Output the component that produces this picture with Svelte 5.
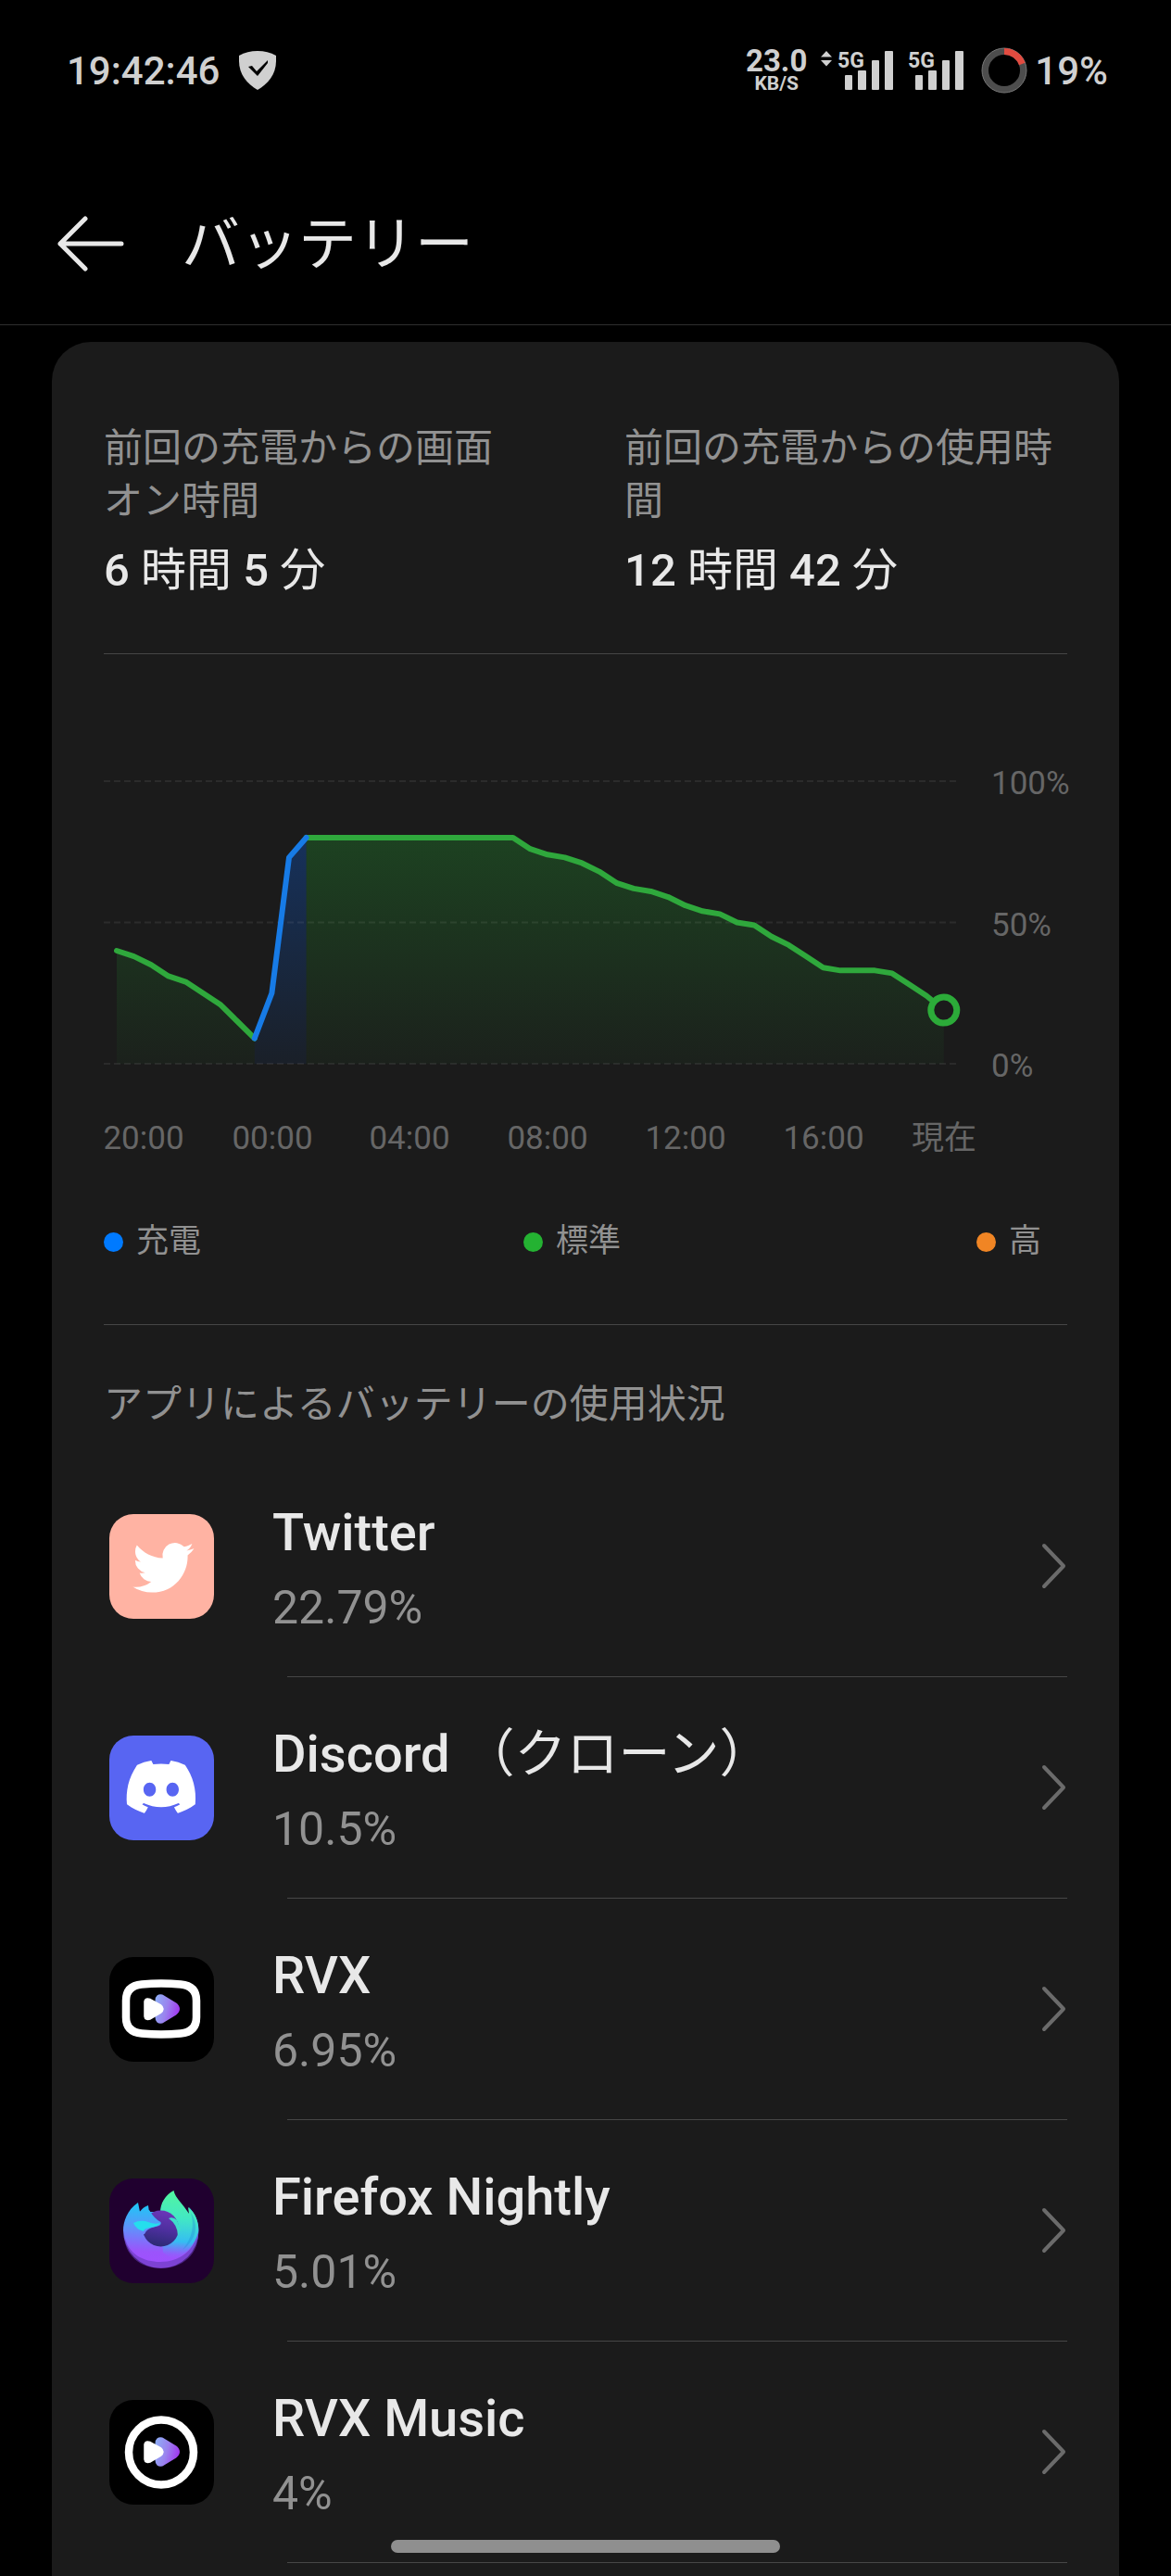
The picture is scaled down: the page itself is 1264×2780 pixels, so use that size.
<script>
  // Niveau de batterie toutes les 30 minutes, sur 24 heures
  const levels = [
    40, 38, 35, 31, 29, 25, 21, 15, 9, 25, 73, 80, 80, 80, 80, 80, 80,
    80, 80, 80, 80, 80, 80, 80, 76, 74, 73, 71, 68, 64, 62, 61, 59, 56,
    54, 53, 50, 49, 45, 42, 38, 34, 33, 33, 33, 32, 28, 24, 19
  ];

  const segments = [
    { from: 0, to: 8, kind: 'normal' },
    { from: 11, to: 48, kind: 'normal' },
    { from: 8, to: 11, kind: 'charging' }
  ];

  const gridLines = [100, 50, 0];

  const hours = [
    { label: '20:00', x: 43 },
    { label: '00:00', x: 182 },
    { label: '04:00', x: 330 },
    { label: '08:00', x: 479 },
    { label: '12:00', x: 628 },
    { label: '16:00', x: 777 },
    { label: '現在', x: 907 }
  ];

  const stats = [
    { label: '前回の充電からの画面オン時間', hours: 6, minutes: 5 },
    { label: '前回の充電からの使用時間', hours: 12, minutes: 42 }
  ];

  const legend = [
    { label: '充電', kind: 'charging' },
    { label: '標準', kind: 'normal' },
    { label: '高', kind: 'high' }
  ];

  const apps = [
    { name: 'Twitter', usage: '22.79%', icon: 'twitter' },
    { name: 'Discord', suffix: '（クローン）', usage: '10.5%', icon: 'discord' },
    { name: 'RVX', usage: '6.95%', icon: 'rvx' },
    { name: 'Firefox Nightly', usage: '5.01%', icon: 'firefox' },
    { name: 'RVX Music', usage: '4%', icon: 'music' }
  ];

  const px = (i) => 14 + i * 18.6;
  const py = (level) => 348 - level * 3.05;

  function linePath({ from, to }) {
    return levels
      .slice(from, to + 1)
      .map((level, i) => `${i ? 'L' : 'M'}${px(from + i)} ${py(level)}`)
      .join(' ');
  }

  function areaPath(segment) {
    return `${linePath(segment)} L${px(segment.to)} ${py(0)} L${px(segment.from)} ${py(0)} Z`;
  }
</script>

{#snippet signal(arrows)}
  <svg class="signal" width={arrows ? 80 : 62} height="52" viewBox="{arrows ? 0 : 18} -4 {arrows ? 80 : 62} 52" aria-hidden="true">
    {#if arrows}
      <path d="M7 1 L13 7.500 H1 Z M7 17.500 L13 11 H1 Z" />
    {/if}
    <text x="19" y="19">5G</text>
    <rect x="27" y="27" width="8" height="16" rx="1" />
    <rect x="41" y="22" width="9" height="21" rx="1" />
    <rect x="56" y="11" width="8" height="32" rx="1" />
    <rect x="70" y="1" width="9" height="42" rx="1" />
  </svg>
{/snippet}

{#snippet play()}
  <path d="M51 47 Q51 41 57 42 L71 50.500 Q78 56 71 61.500 L57 70 Q51 71 51 65 Z" fill="url(#play)" stroke="url(#play)" stroke-width="3" stroke-linejoin="round" />
  <path d="M38.500 48 Q39 44.500 44 46 L55 52 Q60 56 55 60 L44 66.500 Q39 68 38.500 64 Z" fill="#fff" stroke="#fff" stroke-width="2.500" stroke-linejoin="round" />
{/snippet}

<div class="screen">
  <div class="status">
    <span class="clock">19:42:46</span>
    <svg class="shield" width="42" height="42" viewBox="0 0 42 42" aria-hidden="true">
      <path d="M1 5 Q10 0 21 0 Q32 0 41 5 V11 C41 25 32 36 21 42 C10 36 1 25 1 11 Z" fill="#d0d0d0" />
      <path d="M11 17 L15 16 L20 22 L32 10 V13 L21 27 Z" fill="#000" />
    </svg>

    <div class="status-right">
      <div class="rate">
        <span class="rate-value">23.0</span>
        <span class="rate-unit">KB/S</span>
      </div>
      {@render signal(true)}
      {@render signal(false)}
      <div class="battery">
        <svg width="50" height="50" viewBox="0 0 50 50" fill="none" stroke-width="7" aria-hidden="true">
          <circle cx="25" cy="25" r="20.500" stroke="#4d4d4d" />
          <circle cx="25" cy="25" r="24" stroke="#777" stroke-width="1" />
          <path d="M25 4.500 A20.500 20.500 0 0 1 44.300 18" stroke="#e24b40" />
        </svg>
        <span>19%</span>
      </div>
    </div>
  </div>

  <header class="header">
    <button type="button" class="back" aria-label="戻る">
      <svg width="72" height="60" viewBox="0 0 72 60" fill="none" stroke="currentColor" stroke-width="5" stroke-linecap="round" stroke-linejoin="round" aria-hidden="true">
        <path d="M69 30 H3 M30 3 L3 30 L30 57" />
      </svg>
    </button>
    <h1>バッテリー</h1>
  </header>

  <main class="card">
    <section class="stats">
      {#each stats as stat}
        <div>
          <p class="stat-label">{stat.label}</p>
          <p class="stat-value"><b>{stat.hours}</b> 時間 <b>{stat.minutes}</b> 分</p>
        </div>
      {/each}
    </section>

    <hr />

    <section class="usage">
      <svg class="chart" viewBox="0 0 1040 460" role="img" aria-label="バッテリー残量">
        <defs>
          <linearGradient id="fill-normal" gradientUnits="userSpaceOnUse" x1="0" y1="104" x2="0" y2="348">
            <stop offset="0" stop-color="#22b032" stop-opacity="0.26" />
            <stop offset="1" stop-color="#22b032" stop-opacity="0.04" />
          </linearGradient>
          <linearGradient id="fill-charging" gradientUnits="userSpaceOnUse" x1="0" y1="104" x2="0" y2="348">
            <stop offset="0" stop-color="#0a6aff" stop-opacity="0.28" />
            <stop offset="1" stop-color="#0a6aff" stop-opacity="0.06" />
          </linearGradient>
        </defs>

        {#each segments as segment}
          <path d={areaPath(segment)} fill="url(#fill-{segment.kind})" />
        {/each}

        {#each gridLines as value}
          <line class="grid" x1="0" x2="920" y1={py(value)} y2={py(value)} />
          <text class="tick" x="958" y={py(value) + 14}>{value}%</text>
        {/each}

        {#each segments as segment}
          <path class="line {segment.kind}" d={linePath(segment)} />
        {/each}
        <circle class="now" cx={px(48)} cy={py(19)} r="14" />

        {#each hours as hour}
          <text class="tick hour" x={hour.x} y="440">{hour.label}</text>
        {/each}
      </svg>

      <ul class="legend">
        {#each legend as item}
          <li><span class="dot {item.kind}"></span>{item.label}</li>
        {/each}
      </ul>
    </section>

    <hr />

    <section>
      <h2>アプリによるバッテリーの使用状況</h2>
      <ul class="apps">
        {#each apps as app}
          <li>
            <a class="app" href="#{app.icon}">
              <svg class="app-icon" viewBox="0 0 113 113" aria-hidden="true">
                {#if app.icon === 'twitter'}
                  <rect width="113" height="113" rx="26" fill="#ffb3a3" />
                  <path
                    transform="translate(25.300 24.800) scale(2.750)"
                    fill="#fff"
                    d="M23.953 4.570a10 10 0 01-2.825.775 4.958 4.958 0 002.163-2.723c-.951.555-2.005.959-3.127 1.184a4.920 4.920 0 00-8.384 4.482C7.690 8.095 4.067 6.130 1.640 3.162a4.822 4.822 0 00-.666 2.475c0 1.710.870 3.213 2.188 4.096a4.904 4.904 0 01-2.228-.616v.060a4.923 4.923 0 003.946 4.827 4.996 4.996 0 01-2.212.085 4.936 4.936 0 004.604 3.417 9.867 9.867 0 01-6.102 2.105c-.390 0-.779-.023-1.170-.067a13.995 13.995 0 007.557 2.209c9.053 0 13.998-7.496 13.998-13.985 0-.210 0-.420-.015-.630A9.935 9.935 0 0024 4.590z"
                  />
                {:else if app.icon === 'discord'}
                  <rect width="113" height="113" rx="26" fill="#5865f2" />
                  <path
                    transform="translate(18.700 18.200) scale(3.100)"
                    fill="#fff"
                    d="M20.317 4.3698a19.7913 19.7913 0 00-4.8851-1.5152.0741.0741 0 00-.0785.0371c-.211.3753-.4447.8648-.6083 1.2495-1.8447-.2762-3.68-.2762-5.4868 0-.1636-.3933-.4058-.8742-.6177-1.2495a.077.077 0 00-.0785-.037 19.7363 19.7363 0 00-4.8852 1.515.0699.0699 0 00-.0321.0277C.5334 9.0458-.319 13.5799.0992 18.0578a.0824.0824 0 00.0312.0561c2.0528 1.5076 4.0413 2.4228 5.9929 3.0294a.0777.0777 0 00.0842-.0276c.4616-.6304.8731-1.2952 1.226-1.9942a.076.076 0 00-.0416-.1057c-.6528-.2476-1.2743-.5495-1.8722-.8923a.077.077 0 01-.0076-.1277c.1258-.0943.2517-.1923.3718-.2914a.0743.0743 0 01.0776-.0105c3.9278 1.7933 8.18 1.7933 12.0614 0a.0739.0739 0 01.0785.0095c.1202.099.246.1981.3728.2924a.077.077 0 01-.0066.1276 12.2986 12.2986 0 01-1.873.8914.0766.0766 0 00-.0407.1067c.3604.698.7719 1.3628 1.225 1.9932a.076.076 0 00.0842.0286c1.961-.6067 3.9495-1.5219 6.0023-3.0294a.077.077 0 00.0313-.0552c.5004-5.177-.8382-9.6739-3.5485-13.6604a.061.061 0 00-.0312-.0286zM8.02 15.3312c-1.1825 0-2.1569-1.0857-2.1569-2.419 0-1.3332.9555-2.4189 2.157-2.4189 1.2108 0 2.1757 1.0952 2.1568 2.419 0 1.3332-.9555 2.4189-2.1569 2.4189zm7.9748 0c-1.1825 0-2.1569-1.0857-2.1569-2.419 0-1.3332.9554-2.4189 2.1569-2.4189 1.2108 0 2.1757 1.0952 2.1568 2.419 0 1.3332-.946 2.4189-2.1568 2.4189Z"
                  />
                {:else if app.icon === 'firefox'}
                  <defs>
                    <linearGradient id="fox-body" gradientUnits="userSpaceOnUse" x1="50" y1="28" x2="46" y2="92">
                      <stop offset="0" stop-color="#1cc8f5" />
                      <stop offset="0.4" stop-color="#5c95fb" />
                      <stop offset="0.8" stop-color="#9b54fb" />
                      <stop offset="1" stop-color="#a050ff" />
                    </linearGradient>
                    <linearGradient id="fox-flame" gradientUnits="userSpaceOnUse" x1="74" y1="14" x2="70" y2="86">
                      <stop offset="0" stop-color="#52f5a0" />
                      <stop offset="0.4" stop-color="#42e8c4" />
                      <stop offset="0.75" stop-color="#35bdf2" />
                      <stop offset="1" stop-color="#7f72fa" stop-opacity="0" />
                    </linearGradient>
                    <linearGradient id="fox-orb" x1="0.5" y1="0" x2="0.3" y2="1">
                      <stop offset="0" stop-color="#6b36b8" />
                      <stop offset="0.5" stop-color="#4d2f9e" />
                      <stop offset="1" stop-color="#2a2a72" />
                    </linearGradient>
                  </defs>
                  <rect width="113" height="113" rx="26" fill="#20002f" />
                  <path d="M31 26 C19 34 15 47 15 56 A40.700 40.700 0 0 0 96.500 56 C96.500 46 92 37 86 31 L87 38 L56 36 L43 36 L42 29 Q36 31 33 36 Z" fill="url(#fox-body)" />
                  <path d="M16 61 C20 82 37 90 55 90 C76 90 92 78 96 56 C98 82 78 97 56 97 C33 97 16 82 16 61 Z" fill="#6538b8" opacity="0.6" />
                  <path d="M55 37 C55 27 60 18 69.500 13 C71 21 80 28 86 38 L85 31 C93 37 97 47 96 58 C92 72 82 84 68 87 L58 80 Z" fill="url(#fox-flame)" />
                  <path d="M88 37 C97 50 94 66 79 77 C90 64 92 50 88 37 Z" fill="#2591d8" opacity="0.4" />
                  <circle cx="55.500" cy="54" r="19.500" fill="url(#fox-orb)" />
                  <path d="M64 43 Q69 41 73 45 L77 55 L74 62 Q74 50 64 43 Z" fill="#40dccb" />
                  <path d="M30 36 L43 34 Q49 44 55.500 47 Q57 51 50 52 Q40 54 38 60 L30 60 Z" fill="url(#fox-body)" />
                  <path d="M26 48 Q34 44 42 47 Q49 50 55 48 Q53 52 44 53 Q37 54 37 57 Q29 55 26 48 Z" fill="#25deed" />
                {:else}
                  <defs>
                    <linearGradient id="play" gradientUnits="userSpaceOnUse" x1="50" y1="50" x2="75" y2="56">
                      <stop offset="0" stop-color="#8fa9f5" />
                      <stop offset="0.5" stop-color="#9a82ee" />
                      <stop offset="1" stop-color="#a03cf0" />
                    </linearGradient>
                  </defs>
                  <rect width="113" height="113" rx="26" fill="#000" />
                  {#if app.icon === 'rvx'}
                    <path d="M35 29.500 Q56 27.500 77 29.500 Q94 31 94 47 V65 Q94 81 77 82.500 Q56 84.500 35 82.500 Q18 81 18 65 V47 Q18 31 35 29.500 Z" fill="none" stroke="#fff" stroke-width="8.500" />
                  {:else}
                    <circle cx="56" cy="56.500" r="35" fill="none" stroke="#fff" stroke-width="8.500" />
                  {/if}
                  {@render play()}
                {/if}
              </svg>
              <span class="app-text">
                <span class="app-name">{app.name}{#if app.suffix}&nbsp;<span class="app-suffix">{app.suffix}</span>{/if}</span>
                <span class="app-usage">{app.usage}</span>
              </span>
              <svg class="chevron" width="28" height="50" viewBox="0 0 28 50" fill="none" stroke="#6b6b6b" stroke-width="4" stroke-linecap="round" stroke-linejoin="round" aria-hidden="true">
                <path d="M3 3 L24 25 L3 47" />
              </svg>
            </a>
            <hr />
          </li>
        {/each}
      </ul>
    </section>
  </main>

  <div class="home-bar"></div>
</div>

<style>
  :global(body) {
    margin: 0;
    background: #000;
  }
  .screen {
    display: flex;
    flex-direction: column;
    min-height: 100vh;
    background: #000;
    color: #e8e8e8;
    font-family: Roboto, 'Noto Sans CJK JP', sans-serif;
  }
  h1,
  h2,
  p,
  ul {
    margin: 0;
    padding: 0;
    font-weight: 400;
    list-style: none;
  }
  hr {
    height: 1px;
    margin: 0;
    border: none;
    background: #464646;
  }

  .status {
    display: flex;
    align-items: center;
    height: 152px;
    padding: 0 68px 0 72px;
    color: #d0d0d0;
    font-size: 42px;
    font-weight: 500;
  }
  .shield {
    margin-left: 20px;
  }
  .status-right {
    display: flex;
    align-items: center;
    gap: 14px;
    margin-left: auto;
  }
  .rate {
    display: flex;
    flex-direction: column;
    align-items: center;
    padding-top: 4px;
    font-weight: 700;
  }
  .rate-value {
    font-size: 33px;
    line-height: 24px;
  }
  .rate-unit {
    font-size: 21px;
    line-height: 24px;
  }
  .signal {
    fill: #d0d0d0;
    font-size: 23px;
    font-weight: 700;
  }
  .battery {
    display: flex;
    align-items: center;
    gap: 8px;
    margin-left: 4px;
  }

  .header {
    display: flex;
    align-items: center;
    gap: 62px;
    height: 174px;
    padding: 24px 62px 0;
    border-bottom: 1px solid #2e2e2e;
  }
  .back {
    display: flex;
    padding: 0;
    border: none;
    background: none;
    color: inherit;
    cursor: pointer;
  }
  h1 {
    padding-top: 2px;
    font-size: 63px;
    line-height: 80px;
  }

  .card {
    flex: 1;
    margin: 18px 56px 0;
    padding: 0 56px;
    border-radius: 42px 42px 0 0;
    background: #1b1b1b;
  }

  .stats {
    display: grid;
    grid-template-columns: 46fr 48fr;
    gap: 104px;
    padding: 86px 0 55px;
  }
  .stat-label {
    color: #919191;
    font-size: 42px;
    line-height: 57px;
  }
  .stat-value {
    margin-top: 13px;
    font-size: 49px;
    line-height: 68px;
  }
  .stat-value b {
    font-weight: 500;
  }

  .usage {
    padding: 94px 0 64px;
  }
  .chart {
    display: block;
    width: 100%;
    overflow: visible;
  }
  .grid {
    stroke: #fff;
    stroke-opacity: 0.07;
    stroke-width: 2;
    stroke-dasharray: 7 4;
  }
  .tick {
    fill: #666;
    font-size: 35px;
  }
  .hour {
    text-anchor: middle;
  }
  .line {
    fill: none;
    stroke-width: 6;
    stroke-linejoin: round;
    stroke-linecap: round;
  }
  .line.normal {
    stroke: #2fa83c;
  }
  .line.charging {
    stroke: #177be6;
  }
  .now {
    fill: #1b1b1b;
    stroke: #2cab39;
    stroke-width: 7;
  }

  .legend {
    display: grid;
    grid-template-columns: 453fr 489fr 98fr;
    margin-top: 55px;
    color: #919191;
    font-size: 35px;
    line-height: 50px;
  }
  .legend li {
    display: flex;
    align-items: center;
    gap: 14px;
  }
  .dot {
    width: 21px;
    height: 21px;
    border-radius: 50%;
  }
  .dot.charging {
    background: #007aff;
  }
  .dot.normal {
    background: #24b232;
  }
  .dot.high {
    background: #f08524;
  }

  h2 {
    padding: 58px 0 27px;
    color: #919191;
    font-size: 42px;
    line-height: 56px;
  }
  .app {
    display: flex;
    align-items: center;
    height: 238px;
    padding-left: 6px;
    color: inherit;
    text-decoration: none;
  }
  .app-icon {
    flex: none;
    width: 113px;
    height: 113px;
  }
  .app-text {
    display: flex;
    flex: 1;
    flex-direction: column;
    margin-left: 63px;
  }
  .app-name {
    font-size: 56px;
    font-weight: 500;
    line-height: 90px;
  }
  .app-suffix {
    font-weight: 400;
  }
  .app-usage {
    color: #919191;
    font-size: 50px;
    line-height: 72px;
  }
  .apps hr {
    margin-left: 198px;
  }

  .home-bar {
    position: fixed;
    bottom: 25px;
    left: 50%;
    width: 420px;
    height: 14px;
    margin-left: -210px;
    border-radius: 7px;
    background: #8f8f8f;
  }
</style>
